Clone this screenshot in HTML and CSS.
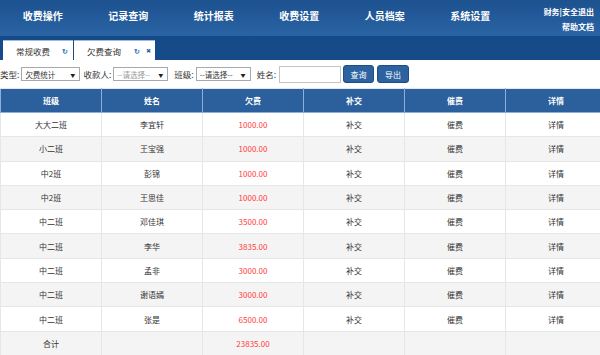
FILE: index.html
```html
<!DOCTYPE html>
<html lang="zh-CN">
<head>
    <meta charset="UTF-8">
    <title>欠费查询</title>
    <link rel="stylesheet" href="styles.css">
</head>
<body>

<div class="header">
    <div class="nav">
        <div class="nav-item">收费操作</div>
        <div class="nav-item">记录查询</div>
        <div class="nav-item">统计报表</div>
        <div class="nav-item">收费设置</div>
        <div class="nav-item">人员档案</div>
        <div class="nav-item">系统设置</div>
    </div>
    <div class="user-links">
        <div>财务|安全退出</div>
        <div>帮助文档</div>
    </div>
</div>

<div class="tab-bar">
    <div class="tab tab-first">常规收费<span class="tab-icon">&#x21BB;</span></div>
    <div class="tab tab-active">欠费查询<span class="tab-icon">&#x21BB;</span><span class="tab-close">&#x2716;</span></div>
</div>

<div class="toolbar">
    <label>类型:</label>
    <div class="select select-type"><span>欠费统计</span><span class="arrow">&#x25BC;</span></div>
    <label class="gap-sm">收款人:</label>
    <div class="select select-grey"><span>--请选择--</span><span class="arrow">&#x25BC;</span></div>
    <label class="gap">班级:</label>
    <div class="select"><span>--请选择--</span><span class="arrow">&#x25BC;</span></div>
    <label class="gap">姓名:</label>
    <input class="name-input" type="text">
    <button class="button">查询</button>
    <button class="button">导出</button>
</div>

<div class="table-wrap">
    <table class="data-table">
        <thead>
            <tr>
                <th>班级</th><th>姓名</th><th>欠费</th><th>补交</th><th>催费</th><th>详情</th>
            </tr>
        </thead>
        <tbody id="rows"></tbody>
    </table>
</div>

<script>
    const rows = [
        ['大大二班', '李宜轩', '1000.00'],
        ['小二班', '王宝强', '1000.00'],
        ['中2班', '彭锦', '1000.00'],
        ['中2班', '王思佳', '1000.00'],
        ['中二班', '邓佳琪', '3500.00'],
        ['中二班', '李华', '3835.00'],
        ['中二班', '孟非', '3000.00'],
        ['中二班', '谢语嫣', '3000.00'],
        ['中二班', '张是', '6500.00'],
    ];

    const body = document.getElementById('rows');
    let html = '';
    rows.forEach(r => {
        html += '<tr><td>' + r[0] + '</td><td>' + r[1] + '</td><td class="money">' + r[2] +
            '</td><td>补交</td><td>催费</td><td>详情</td></tr>';
    });
    html += '<tr><td>合计</td><td></td><td class="money">23835.00</td><td></td><td></td><td></td></tr>';
    body.innerHTML = html;
</script>

</body>
</html>
```

FILE: styles.css
```css
* {
    box-sizing: border-box;
}

body {
    font-family: 'Noto Sans CJK SC', 'Noto Sans', sans-serif;
    margin: 0;
    padding: 0;
    background-color: #fff;
    color: #333;
    font-size: 8px;
    width: 600px;
    height: 355px;
    overflow: hidden;
}

.header {
    height: 36px;
    background: linear-gradient(#1d5190, #2a64a4);
    display: flex;
    justify-content: space-between;
    color: #fff;
}

.nav {
    display: flex;
}

.nav-item {
    width: 85.5px;
    text-align: center;
    line-height: 32px;
    font-size: 10px;
    font-weight: bold;
}

.user-links {
    padding: 4px 6px 0 0;
    text-align: right;
    font-size: 8px;
    font-weight: bold;
    line-height: 15px;
}

.tab-bar {
    height: 24px;
    background-color: #154b88;
    display: flex;
    align-items: flex-end;
    padding-left: 3px;
    gap: 1px;
}

.tab {
    height: 20px;
    background-color: #fff;
    border-top: 1px solid #9fbbe0;
    display: flex;
    align-items: center;
    font-size: 8.5px;
    color: #333;
}

.tab-first {
    width: 70px;
    padding: 0 5px 0 13px;
}

.tab-active {
    width: 81px;
    padding: 0 4px 0 13px;
}

.tab-icon {
    color: #3a78c2;
    font-size: 7px;
    font-weight: bold;
    margin-left: auto;
}

.tab-close {
    color: #2a64a4;
    font-size: 6px;
    margin-left: 6px;
}

.toolbar {
    height: 28px;
    display: flex;
    align-items: center;
    font-size: 8.5px;
}

.toolbar label {
    margin-right: 2px;
}

.toolbar .gap-sm {
    margin-left: 3px;
}

.toolbar .gap {
    margin-left: 6px;
}

.select {
    width: 55px;
    height: 14px;
    border: 1px solid #a9a9a9;
    background-color: #fff;
    display: flex;
    justify-content: space-between;
    align-items: center;
    padding: 0 4px 0 3px;
    font-size: 7.5px;
}

.select-type {
    width: 59px;
}

.select-grey {
    color: #999;
}

.select .arrow {
    font-size: 5px;
    color: #222;
}

.name-input {
    width: 62px;
    height: 17px;
    border: 1px solid #c4c4c4;
    padding: 0 2px;
    margin: 0 2px 0 1px;
}

.button {
    width: 31px;
    height: 18px;
    padding: 0;
    margin-right: 3px;
    background-color: #2c62a0;
    color: white;
    font-size: 8px;
    font-family: inherit;
    border: 1px solid #1d4e88;
    border-radius: 3px;
}

.button + .button {
    width: 32px;
}

.table-wrap {
    width: 600px;
    overflow: hidden;
}

.data-table {
    width: 607px;
    border-collapse: collapse;
    table-layout: fixed;
}

.data-table th {
    background-color: #2b609d;
    color: #fff;
    font-size: 8px;
    font-weight: bold;
    height: 24px;
    padding: 0;
    border: 1px solid #8db0d8;
    border-top-color: #dfe8f3;
}

.data-table td {
    height: 24.3px;
    padding: 0;
    text-align: center;
    border: 1px solid #e6e6e6;
    font-size: 8px;
    color: #333;
}

.data-table tbody tr:nth-child(even) td {
    background-color: #f4f4f4;
}

.data-table td.money {
    color: #ff3b3b;
}
```
